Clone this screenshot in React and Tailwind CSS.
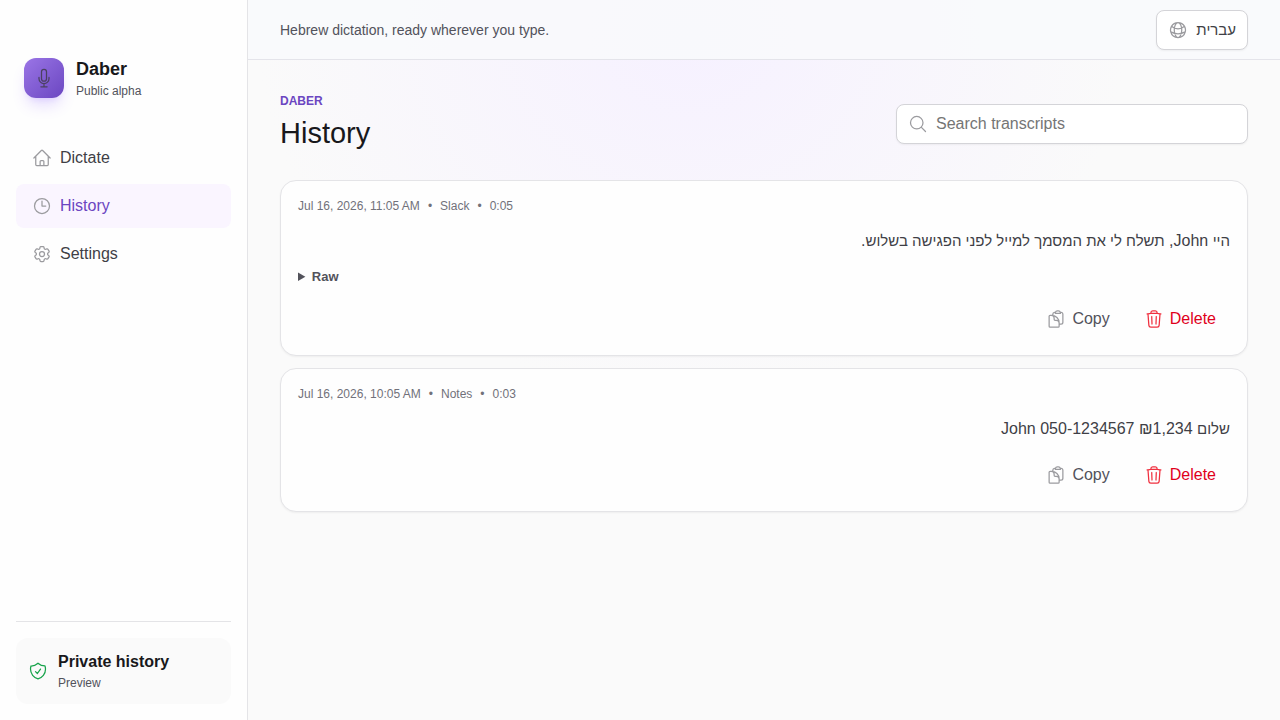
import React, { useState } from 'react';
import clsx from 'clsx';
import {
  HiOutlineClipboardDocument,
  HiOutlineClock,
  HiOutlineCog6Tooth,
  HiOutlineGlobeAlt,
  HiOutlineHome,
  HiOutlineMagnifyingGlass,
  HiOutlineMicrophone,
  HiOutlineShieldCheck,
  HiOutlineTrash,
} from 'react-icons/hi2';

const NAV = [
  { id: 'dictate', label: 'Dictate', icon: HiOutlineHome },
  { id: 'history', label: 'History', icon: HiOutlineClock },
  { id: 'settings', label: 'Settings', icon: HiOutlineCog6Tooth },
];

const ENTRIES = [
  {
    id: 1,
    date: 'Jul 16, 2026, 11:05 AM',
    app: 'Slack',
    duration: '0:05',
    text: 'היי John, תשלח לי את המסמך למייל לפני הפגישה בשלוש.',
    raw: 'היי ג׳ון תשלח לי את המסמך למייל לפני הפגישה בשלוש',
  },
  {
    id: 2,
    date: 'Jul 16, 2026, 10:05 AM',
    app: 'Notes',
    duration: '0:03',
    text: 'שלום ₪1,234 John 050-1234567',
  },
];

const HebrewText = ({ text }) =>
  text.split(/([\u0590-\u05ff]+(?: [\u0590-\u05ff]+)*)/).map((part, i) =>
    i % 2 ? <span key={i} className="text-[15px] leading-none">{part}</span> : part
  );

const Sidebar = ({ active, onSelect }) => (
  <aside className="flex w-62 shrink-0 flex-col border-r border-[#e4e4e7] bg-[#fefefe] p-4">
    <div className="mt-[39px] flex items-center gap-3 px-2">
      <div className="flex size-10 items-center justify-center rounded-xl bg-linear-to-br from-[#9b75e6] to-[#6b46c1] shadow-lg shadow-[#7c4dff]/20">
        <HiOutlineMicrophone className="size-5 text-[#4b4160]" />
      </div>
      <div className="pt-0.5">
        <p className="text-lg leading-6 font-bold text-[#18181b]">Daber</p>
        <p className="text-xs leading-5 text-[#52525b]">Public alpha</p>
      </div>
    </div>

    <nav className="mt-[35px] flex flex-col gap-1">
      {NAV.map(({ id, label, icon: NavIcon }) => (
        <a
          key={id}
          href={`#${id}`}
          onClick={() => onSelect(id)}
          aria-current={active === id ? 'page' : undefined}
          className={clsx('flex h-11 items-center gap-2 rounded-lg px-4', active === id ? 'bg-[#faf5ff] text-[#6b46c1]' : 'text-[#3f3f46] hover:bg-zinc-50')}
        >
          <NavIcon className="size-5 text-[#9b9b9f]" />
          <span>{label}</span>
        </a>
      ))}
    </nav>

    <div className="mt-auto border-t border-[#e4e4e7] pt-4">
      <div className="flex items-center gap-2.5 rounded-xl bg-[#fafafa] p-3">
        <HiOutlineShieldCheck className="size-5 text-[#16a34a]" />
        <div>
          <p className="leading-6 font-bold text-[#18181b]">Private history</p>
          <p className="text-xs leading-[18px] text-[#52525b]">Preview</p>
        </div>
      </div>
    </div>
  </aside>
);

const EntryCard = ({ entry, onDelete }) => {
  const [rawOpen, setRawOpen] = useState(false);

  return (
    <article className="flex flex-col gap-3 rounded-2xl border border-[#e4e4e7] bg-[#fefefe] px-[17px] pt-[17px] pb-4 shadow-xs">
      <div className="flex gap-2 text-xs leading-[17px] text-[#71717a]">
        <time>{entry.date}</time>
        <span>•</span>
        <span>{entry.app}</span>
        <span>•</span>
        <span>{entry.duration}</span>
      </div>
      <p dir="rtl" lang="he" className="leading-7 text-[#3f3f46]"><HebrewText text={entry.text} /></p>
      {entry.raw && (
        <details onToggle={(e) => setRawOpen(e.currentTarget.open)} className="text-[13px] leading-5 text-[#52525b]">
          <summary className="cursor-pointer font-bold">Raw</summary>
          {rawOpen && <p dir="rtl" lang="he" className="mt-2"><HebrewText text={entry.raw} /></p>}
        </details>
      )}
      <div className="flex justify-end gap-1.5">
        <button type="button" onClick={() => navigator.clipboard?.writeText(entry.text)} className="flex h-10 items-center gap-1.5 rounded-lg px-3.5 text-[#52525b] hover:bg-zinc-100">
          <HiOutlineClipboardDocument className="size-5 text-[#9b9b9f]" />
          Copy
        </button>
        <button type="button" onClick={() => onDelete(entry.id)} className="flex h-10 items-center gap-1.5 rounded-lg px-3.5 text-[#e0001b] hover:bg-red-50">
          <HiOutlineTrash className="size-5 text-[#f0303f]" />
          Delete
        </button>
      </div>
    </article>
  );
};

const App = () => {
  const [active, setActive] = useState('history');
  const [query, setQuery] = useState('');
  const [entries, setEntries] = useState(ENTRIES);

  const visible = entries.filter((e) => e.text.includes(query) || e.app.toLowerCase().includes(query.toLowerCase()));

  return (
    <div className="flex min-h-screen bg-[#fafafa] font-['Liberation_Sans',Arial,sans-serif]">
      <Sidebar active={active} onSelect={setActive} />
      <div className="flex min-w-0 flex-1 flex-col bg-[radial-gradient(ellipse_42%_50%_at_43%_5%,#f6f1ff,#fafafa)]">
        <header className="flex h-15 items-center justify-between border-b border-[#e4e4ea] bg-[#f8fafc]/90 px-8">
          <p className="text-sm text-[#52525b]">Hebrew dictation, ready wherever you type.</p>
          <button type="button" lang="he" className="flex h-10 items-center gap-2 rounded-lg border border-[#d4d4d8] bg-white px-[11px] text-[#3f3f46] shadow-xs">
            <HiOutlineGlobeAlt className="size-5 text-[#9b9b9f]" />
            <HebrewText text="עברית" />
          </button>
        </header>

        <main className="px-8 py-8">
          <div className="mb-6 flex items-center justify-between gap-6">
            <div className="pb-1">
              <p className="text-xs leading-[18px] font-bold text-[#6b46c1]">DABER</p>
              <h1 className="mt-1 text-[29px] leading-[38px] text-[#18181b]">History</h1>
            </div>
            <label className="flex h-10 w-88 items-center gap-2 rounded-lg border border-[#d4d4d8] bg-white px-[11px] shadow-xs focus-within:border-[#6b46c1]">
              <HiOutlineMagnifyingGlass className="size-5 text-[#9b9b9f]" />
              <input type="search" aria-label="Search transcripts" value={query} onChange={(e) => setQuery(e.target.value)} placeholder="Search transcripts" className="min-w-0 flex-1 bg-transparent text-[#3f3f46] outline-none placeholder:text-[#757575]" />
            </label>
          </div>

          <div className="flex flex-col gap-3">
            {visible.map((entry) => (
              <EntryCard key={entry.id} entry={entry} onDelete={(id) => setEntries((prev) => prev.filter((e) => e.id !== id))} />
            ))}
          </div>
        </main>
      </div>
    </div>
  );
};

export default App;
